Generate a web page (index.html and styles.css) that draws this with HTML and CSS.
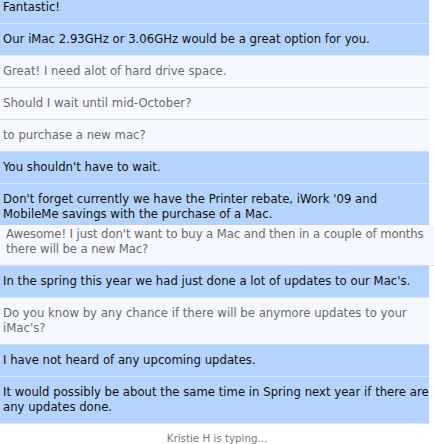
FILE: index.html
```html
<!DOCTYPE html>
<html>
<head>
<meta charset="utf-8">
<link rel="stylesheet" href="styles.css">
</head>
<body>
<div class="chat">
  <div class="msg agent first">Fantastic!</div>
  <div class="msg agent">Our iMac 2.93GHz or 3.06GHz would be a great option for you.</div>
  <div class="msg user">Great! I need alot of hard drive space.</div>
  <div class="msg user">Should I wait until mid-October?</div>
  <div class="msg user">to purchase a new mac?</div>
  <div class="msg agent">You shouldn't have to wait.</div>
  <div class="msg agent">Don't forget currently we have the Printer rebate, iWork '09 and MobileMe savings with the purchase of a Mac.</div>
  <div class="msg user overlap">Awesome! I just don't want to buy a Mac and then in a couple of months there will be a new Mac?</div>
  <div class="msg agent">In the spring this year we had just done a lot of updates to our Mac's.</div>
  <div class="msg user">Do you know by any chance if there will be anymore updates to your iMac's?</div>
  <div class="msg agent">I have not heard of any upcoming updates.</div>
  <div class="msg agent">It would possibly be about the same time in Spring next year if there are any updates done.</div>
</div>
<div class="typing">Kristie H is typing...</div>
</body>
</html>
```

FILE: styles.css
```css
html, body {
  margin: 0;
  padding: 0;
  background: #ffffff;
}
body {
  font-family: "DejaVu Sans", Verdana, sans-serif;
  font-size: 11.7px;
  width: 434px;
  height: 444px;
  overflow: hidden;
}
.chat {
  width: 429px;
  display: flex;
  flex-direction: column;
}
.msg {
  padding: 8px 0 8px 3px;
  line-height: 15px;
  border-bottom: 1px solid #dcdcdc;
}
.msg.first {
  padding-top: 0;
}
.agent {
  background: #b4d4fd;
  color: #111111;
  border-bottom-color: #d7e6fb;
}
.user {
  background: #f5f8fe;
  color: #6b6b6b;
}
.overlap {
  margin-top: -6px;
  margin-right: -5px;
  padding-left: 6px;
  padding-top: 2px;
  letter-spacing: -0.1px;
  position: relative;
}
.typing {
  text-align: center;
  color: #777777;
  font-size: 10.3px;
  line-height: 15px;
  padding-top: 7px;
}
```
